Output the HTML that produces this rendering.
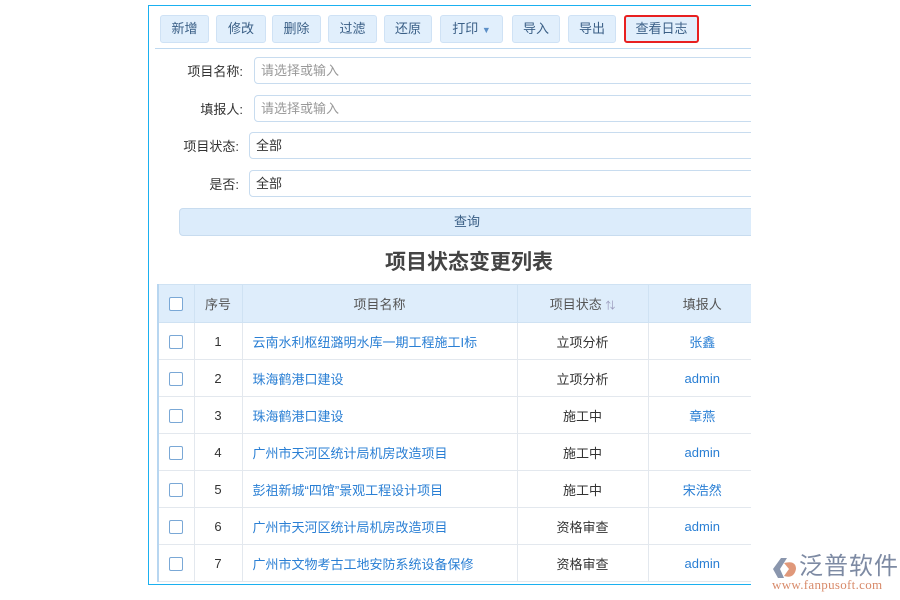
<!DOCTYPE html>
<html><head><meta charset="utf-8"><style>
*{box-sizing:border-box;margin:0;padding:0}
body{width:900px;height:600px;background:#fff;position:relative;overflow:hidden;font-family:"Liberation Sans","Noto Sans CJK SC",sans-serif;font-size:13px;color:#333}
.frame{position:absolute;left:148px;top:5px;width:603px;height:580px;border:1.5px solid #1ab0f0;border-right:none;overflow:hidden}
.btn{position:absolute;top:9px;height:28px;background:#e1effc;border:1px solid #cfe2f5;border-radius:3px;color:#3a5f86;line-height:26px;text-align:center;font-size:13px}
.sep{position:absolute;left:6px;right:0;top:42px;border-top:1px solid #bfd9f0}
.lbl{position:absolute;text-align:right;font-size:13px;color:#333}
.inp{position:absolute;right:-4px;height:27px;border:1px solid #c8dcef;border-radius:4px;line-height:25px;padding-left:6px;font-size:13px}
.ph{color:#999}
.q{position:absolute;left:30px;right:-4px;top:202px;height:28px;background:#dcecfb;border:1px solid #c8dcef;border-radius:4px;text-align:center;line-height:26px;color:#3a5f86}
.title{position:absolute;left:0;width:640px;text-align:center;top:240px;font-size:21px;font-weight:bold;color:#444}
table{position:absolute;left:8px;top:278px;width:600px;border-collapse:collapse;border-left:2px solid #b8d6f0}
td,th{border:1px solid #e3e8ee;height:37px;text-align:center;font-weight:normal;font-size:13px}
th{background:#deedfb;color:#555;height:38px;border-color:#cfe2f3}
.cb{display:inline-block;width:14px;height:14px;border:1px solid #7aa8d6;border-radius:2px;vertical-align:middle;background:#fff}
.nm{text-align:left;padding-left:10px;color:#2a7fd4}
.bl{color:#2a7fd4}
</style></head><body>
<div class="frame">
<div class="btn" style="left:11px;width:49px">新增</div>
<div class="btn" style="left:67px;width:50px">修改</div>
<div class="btn" style="left:123px;width:49px">删除</div>
<div class="btn" style="left:179px;width:49px">过滤</div>
<div class="btn" style="left:235px;width:48px">还原</div>
<div class="btn" style="left:291px;width:63px">打印 <span style="font-size:9px;color:#5b8fc7">▼</span></div>
<div class="btn" style="left:363px;width:48px">导入</div>
<div class="btn" style="left:419px;width:48px">导出</div>
<div class="btn" style="left:475px;width:75px;border:2px solid #e82020;line-height:24px">查看日志</div>
<div class="sep"></div>
<div class="lbl" style="left:0;width:94px;top:55px">项目名称:</div>
<div class="inp" style="left:105px;top:51px"><span class="ph">请选择或输入</span></div>
<div class="lbl" style="left:0;width:94px;top:93px">填报人:</div>
<div class="inp" style="left:105px;top:89px"><span class="ph">请选择或输入</span></div>
<div class="lbl" style="left:0;width:90px;top:130px">项目状态:</div>
<div class="inp" style="left:100px;top:126px">全部</div>
<div class="lbl" style="left:0;width:90px;top:168px">是否:</div>
<div class="inp" style="left:100px;top:164px">全部</div>
<div class="q">查询</div>
<div class="title">项目状态变更列表</div>
<table>
<tr><th style="width:36px"><span class="cb"></span></th><th style="width:48px">序号</th><th style="width:275px">项目名称</th><th style="width:131px">项目状态 <span style="color:#99b;font-size:10px">⇅</span></th><th>填报人</th></tr>
<tr><td><span class="cb"></span></td><td>1</td><td class="nm">云南水利枢纽潞明水库一期工程施工I标</td><td>立项分析</td><td class="bl">张鑫</td></tr>
<tr><td><span class="cb"></span></td><td>2</td><td class="nm">珠海鹤港口建设</td><td>立项分析</td><td class="bl">admin</td></tr>
<tr><td><span class="cb"></span></td><td>3</td><td class="nm">珠海鹤港口建设</td><td>施工中</td><td class="bl">章燕</td></tr>
<tr><td><span class="cb"></span></td><td>4</td><td class="nm">广州市天河区统计局机房改造项目</td><td>施工中</td><td class="bl">admin</td></tr>
<tr><td><span class="cb"></span></td><td>5</td><td class="nm">彭祖新城“四馆”景观工程设计项目</td><td>施工中</td><td class="bl">宋浩然</td></tr>
<tr><td><span class="cb"></span></td><td>6</td><td class="nm">广州市天河区统计局机房改造项目</td><td>资格审查</td><td class="bl">admin</td></tr>
<tr><td><span class="cb"></span></td><td>7</td><td class="nm">广州市文物考古工地安防系统设备保修</td><td>资格审查</td><td class="bl">admin</td></tr>
</table>
</div>
<div style="position:absolute;left:771px;top:556px">
<svg width="28" height="24" viewBox="0 0 28 24"><path d="M2 13 L10 2 L16 2 L9 13 L13 22 L7 22 Z" fill="#8a96ad"/><path d="M13 7 Q25 4 25 13 Q23 23 13 20 L18 13 Z" fill="#e0987a"/></svg>
</div>
<div style="position:absolute;left:799px;top:553px;font-size:24px;line-height:28px;color:#7d8aa3;letter-spacing:1px">泛普软件</div>
<div style="position:absolute;left:772px;top:578px;font-size:13px;line-height:14px;color:#d88a6a;font-family:'Liberation Serif',serif;letter-spacing:.3px">www.fanpusoft.com</div>
</body></html>
